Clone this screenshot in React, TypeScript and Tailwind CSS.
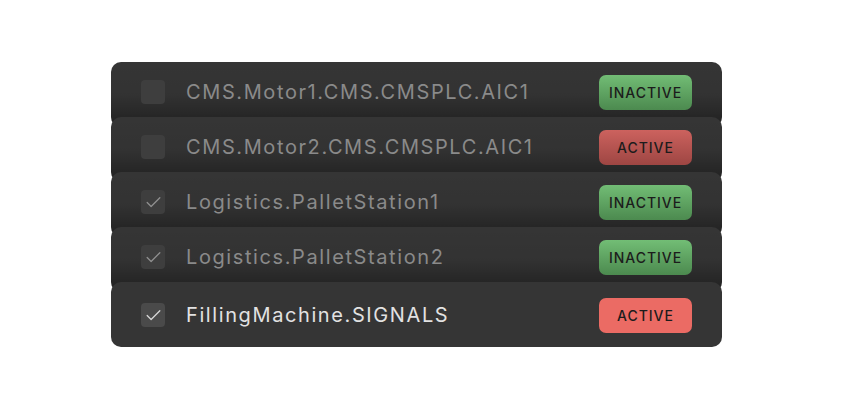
import { Check } from 'lucide-react';

type Row = {
  name: string;
  checked: boolean;
  active: boolean;
};

const rows: Row[] = [
  { name: 'CMS.Motor1.CMS.CMSPLC.AIC1', checked: false, active: false },
  { name: 'CMS.Motor2.CMS.CMSPLC.AIC1', checked: false, active: true },
  { name: 'Logistics.PalletStation1', checked: true, active: false },
  { name: 'Logistics.PalletStation2', checked: true, active: false },
  { name: 'FillingMachine.SIGNALS', checked: true, active: true },
];

function Badge({ active, dim }: { active: boolean; dim: boolean }) {
  let cls = 'bg-[#eb6b64]';
  if (dim && active) cls = 'bg-gradient-to-b from-[#cc625e] to-[#9e4643]';
  if (dim && !active) cls = 'bg-gradient-to-b from-[#72bd75] to-[#4c8a4f]';
  if (!dim && !active) cls = 'bg-[#74c277]';
  return (
    <div
      className={`${cls} w-[93px] h-[35px] rounded-[7px] flex items-center justify-center text-[14px] font-medium tracking-[0.07em] text-[#1c1c1c]`}
    >
      {active ? 'ACTIVE' : 'INACTIVE'}
    </div>
  );
}

export default function App() {
  return (
    <div className="w-[848px] h-[400px] bg-white font-['Inter',sans-serif] pt-[62px] pl-[111px]">
      <div className="w-[611px] flex flex-col">
        {rows.map((row, i) => {
          const dim = i < rows.length - 1;
          return (
            <div
              key={row.name}
              className={`relative h-[65px] rounded-[10px] bg-[#353535] ${i > 0 ? '-mt-[10px]' : ''}`}
            >
              {dim && (
                <div className="absolute inset-0 rounded-[10px] bg-gradient-to-b from-black/0 via-black/5 to-black/40 pointer-events-none" />
              )}
              <div
                className={`relative h-full flex items-start pl-[30px] pr-[30px] ${
                  dim ? 'pt-[18px]' : 'pt-[21px]'
                }`}
              >
                <div
                  className={`w-[24px] h-[24px] rounded-[4px] flex items-center justify-center shrink-0 ${
                    dim ? 'bg-[#3e3e3e]' : 'bg-[#4a4a4a]'
                  }`}
                >
                  {row.checked && (
                    <Check
                      size={19}
                      strokeWidth={1.6}
                      className={dim ? 'text-[#909090]' : 'text-[#d8d8d8]'}
                    />
                  )}
                </div>
                <div
                  className={`ml-[21px] flex-1 h-[24px] flex items-center text-[20px] tracking-[0.08em] ${
                    dim ? 'text-[#8a8a8a]' : 'text-[#e2e2e2]'
                  }`}
                >
                  {row.name}
                </div>
                <div className="-mt-[5px]">
                  <Badge active={row.active} dim={dim} />
                </div>
              </div>
            </div>
          );
        })}
      </div>
    </div>
  );
}
